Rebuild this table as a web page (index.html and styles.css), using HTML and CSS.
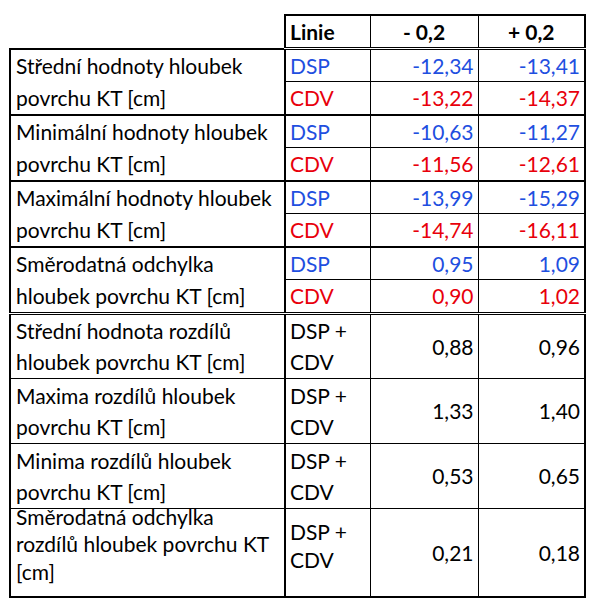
FILE: index.html
```html
<!DOCTYPE html>
<html lang="cs">
<head>
<meta charset="utf-8">
<title>Tabulka</title>
<link rel="stylesheet" href="styles.css">
</head>
<body>
<table class="data">
  <colgroup>
    <col class="c-name">
    <col class="c-line">
    <col class="c-num">
    <col class="c-num2">
  </colgroup>
  <tr class="head">
    <td class="blank"></td>
    <td class="h h-first">Linie</td>
    <td class="h h-mid">- 0,2</td>
    <td class="h h-last">+ 0,2</td>
  </tr>

  <tr class="sub top-group">
    <td class="name" rowspan="2">Střední hodnoty hloubek<br>povrchu KT [cm]</td>
    <td class="line dsp">DSP</td><td class="num dsp">-12,34</td><td class="num last dsp">-13,41</td>
  </tr>
  <tr class="sub">
    <td class="line cdv">CDV</td><td class="num cdv">-13,22</td><td class="num last cdv">-14,37</td>
  </tr>

  <tr class="sub top-group">
    <td class="name" rowspan="2">Minimální hodnoty hloubek<br>povrchu KT [cm]</td>
    <td class="line dsp">DSP</td><td class="num dsp">-10,63</td><td class="num last dsp">-11,27</td>
  </tr>
  <tr class="sub">
    <td class="line cdv">CDV</td><td class="num cdv">-11,56</td><td class="num last cdv">-12,61</td>
  </tr>

  <tr class="sub top-group">
    <td class="name" rowspan="2">Maximální hodnoty hloubek<br>povrchu KT [cm]</td>
    <td class="line dsp">DSP</td><td class="num dsp">-13,99</td><td class="num last dsp">-15,29</td>
  </tr>
  <tr class="sub">
    <td class="line cdv">CDV</td><td class="num cdv">-14,74</td><td class="num last cdv">-16,11</td>
  </tr>

  <tr class="sub top-group">
    <td class="name" rowspan="2">Směrodatná odchylka<br>hloubek povrchu KT [cm]</td>
    <td class="line dsp">DSP</td><td class="num dsp">0,95</td><td class="num last dsp">1,09</td>
  </tr>
  <tr class="sub">
    <td class="line cdv">CDV</td><td class="num cdv">0,90</td><td class="num last cdv">1,02</td>
  </tr>

  <tr class="diff top-double">
    <td class="name">Střední hodnota rozdílů<br>hloubek povrchu KT [cm]</td>
    <td class="line">DSP +<br>CDV</td><td class="num">0,88</td><td class="num last">0,96</td>
  </tr>
  <tr class="diff">
    <td class="name">Maxima rozdílů hloubek<br>povrchu KT [cm]</td>
    <td class="line">DSP +<br>CDV</td><td class="num">1,33</td><td class="num last">1,40</td>
  </tr>
  <tr class="diff">
    <td class="name">Minima rozdílů hloubek<br>povrchu KT [cm]</td>
    <td class="line">DSP +<br>CDV</td><td class="num">0,53</td><td class="num last">0,65</td>
  </tr>
  <tr class="diff tall bottom">
    <td class="name"><div class="lift">Směrodatná odchylka<br>rozdílů hloubek povrchu KT<br>[cm]</div></td>
    <td class="line">DSP +<br>CDV</td><td class="num">0,21</td><td class="num last">0,18</td>
  </tr>
</table>
</body>
</html>
```

FILE: styles.css
```css
html, body {
  margin: 0;
  background: #ffffff;
}

body {
  padding: 14px 0 0 9px;
  font-family: Lato, "Open Sans", "DejaVu Sans", sans-serif;
  font-size: 21px;
  color: #000000;
}

.data {
  border-collapse: collapse;
  table-layout: fixed;
  width: 575px;
}

.c-name { width: 275px; }
.c-line { width: 85px; }
.c-num  { width: 108px; }
.c-num2 { width: 107px; }

.data td {
  padding: 0 4px;
  line-height: 31px;
  vertical-align: top;
  white-space: nowrap;
  border: 1px solid #000;
}

/* header */
.data td.blank {
  border: none;
  border-bottom: 2px solid #000;
}
.data td.h {
  font-weight: 700;
  border-top: 2px solid #000;
  border-bottom: 3px double #000;
  line-height: 31px;
}
.data td.h-first { border-left: 2px solid #000; text-align: left; }
.data td.h-mid { text-align: center; }
.data td.h-last { text-align: center; border-right: 2px solid #000; }

/* body */
.data td.name {
  border-left: 2px solid #000;
  border-right: 2px solid #000;
  padding-left: 5px;
  line-height: 32px;
}
.data td.num { text-align: right; }
.data td.last { border-right: 2px solid #000; }

.top-group td { border-top: 2px solid #000; }

.dsp { color: #1f4fe0; }
.cdv { color: #e8000b; }

.top-double td { border-top: 3px double #000; }

.diff td { height: 64px; vertical-align: middle; }
.top-double td { height: 63px; }
.data .diff td.name,
.data .diff td.line { line-height: 31px; }

.tall td { height: 87px; }
.data .tall td.name {
  vertical-align: top;
  line-height: 27.5px;
}
.lift { margin-top: -6px; }
.data .tall td.line {
  vertical-align: top;
  line-height: 28px;
  padding-top: 9px;
  height: 78px;
}
.bottom td { border-bottom: 2px solid #000; }
```
